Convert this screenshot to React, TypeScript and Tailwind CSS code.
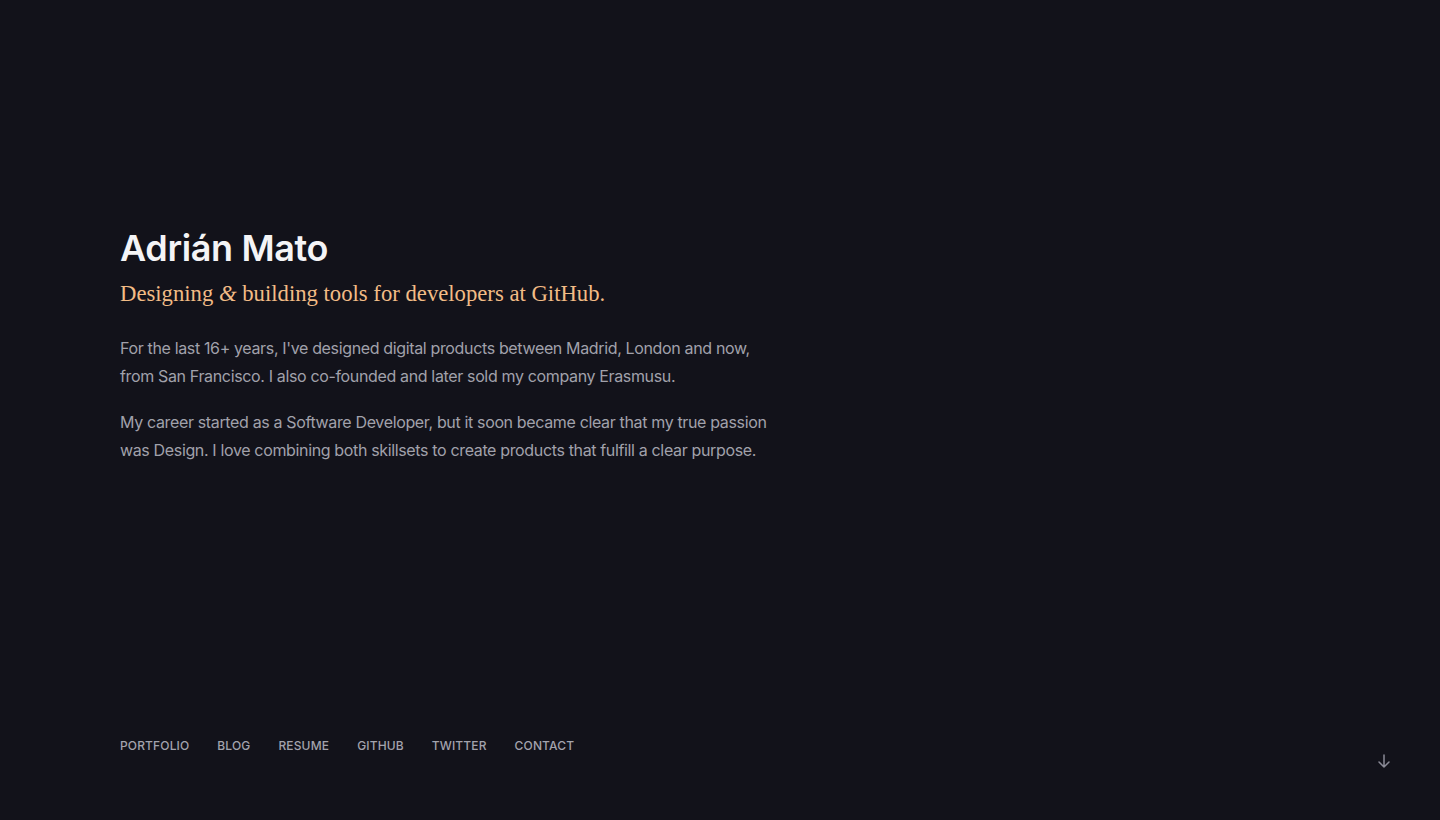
import React from "react";

const links = ["Portfolio", "Blog", "Resume", "GitHub", "Twitter", "Contact"];

export default function App() {
  return (
    <div
      className="h-[820px] w-full flex flex-col bg-[#12121a] text-[#9a9aa5]"
      style={{ fontFamily: "Inter, 'Noto Sans', sans-serif" }}
    >
      <main className="flex-1 px-[120px] pt-[226px]">
        <h1 className="text-[36px] leading-[44px] font-semibold text-[#f4f4f6] tracking-[-0.01em]">
          Adrián Mato
        </h1>
        <p
          className="mt-[8px] text-[22.7px] leading-[32px] text-[#f2bc86]"
          style={{ fontFamily: "'Liberation Serif', serif" }}
        >
          Designing <span className="italic">&amp;</span> building tools for developers at GitHub.
        </p>
        <div className="mt-[24px] text-[16px] leading-[28px] tracking-[-0.022em] text-[#a1a1ab] whitespace-nowrap">
          <p>
            For the last 16+ years, I've designed digital products between Madrid, London and now,
            <br />
            from San Francisco. I also co-founded and later sold my company Erasmusu.
          </p>
          <p className="mt-[18px]">
            My career started as a Software Developer, but it soon became clear that my true passion
            <br />
            was Design. I love combining both skillsets to create products that fulfill a clear purpose.
          </p>
        </div>
      </main>
      <footer className="flex justify-between items-start pl-[120px] pr-[48px] pb-[51px]">
        <nav className="flex gap-[28px] text-[12px] leading-[16px] font-medium uppercase tracking-[0.012em] text-[#a3a3ad]">
          {links.map((l) => (
            <a key={l} href="#">
              {l}
            </a>
          ))}
        </nav>
        <svg
          className="mt-[15px]"
          width="16"
          height="16"
          viewBox="0 0 16 16"
          fill="none"
          stroke="#8a8a96"
          strokeWidth="1.5"
          strokeLinecap="round"
          strokeLinejoin="round"
        >
          <path d="M8 2v12M3 9l5 5 5-5" />
        </svg>
      </footer>
    </div>
  );
}
